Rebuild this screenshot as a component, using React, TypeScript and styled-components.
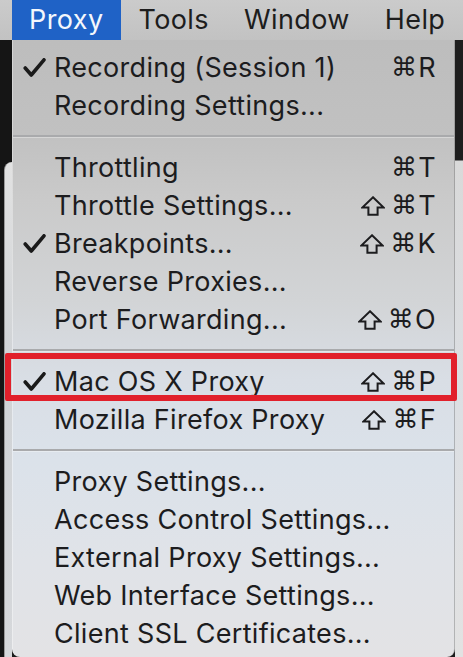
import styled, { createGlobalStyle } from "styled-components";

const GlobalStyle = createGlobalStyle`
  html, body {
    margin: 0;
    padding: 0;
    background: #1b1b1b;
  }
  body {
    font-family: Inter, "Liberation Sans", sans-serif;
  }
`;

type Item = {
  label?: string;
  keys?: string;
  checked?: boolean;
  marked?: boolean;
  separator?: boolean;
};

const MENU_ITEMS: Item[] = [
  { label: "Recording (Session 1)", keys: "⌘R", checked: true },
  { label: "Recording Settings..." },
  { separator: true },
  { label: "Throttling", keys: "⌘T" },
  { label: "Throttle Settings...", keys: "⇧⌘T" },
  { label: "Breakpoints...", keys: "⇧⌘K", checked: true },
  { label: "Reverse Proxies..." },
  { label: "Port Forwarding...", keys: "⇧⌘O" },
  { separator: true },
  { label: "Mac OS X Proxy", keys: "⇧⌘P", checked: true, marked: true },
  { label: "Mozilla Firefox Proxy", keys: "⇧⌘F" },
  { separator: true },
  { label: "Proxy Settings..." },
  { label: "Access Control Settings..." },
  { label: "External Proxy Settings..." },
  { label: "Web Interface Settings..." },
  { label: "Client SSL Certificates..." },
];

const TOP_MENUS = ["Proxy", "Tools", "Window", "Help"];

const Screen = styled.div`
  width: 463px;
  height: 657px;
  overflow: hidden;
  display: flex;
  flex-direction: column;
  background: #1b1b1b;
`;

const MenuBar = styled.div`
  height: 40px;
  flex: none;
  display: flex;
  align-items: stretch;
  padding-left: 12px;
  background: linear-gradient(#cbcbcb, #c2c2c2);
`;

const TopItem = styled.div<{ $open?: boolean }>`
  display: flex;
  align-items: center;
  padding: 0 18px 2px 17px;
  font-size: 27px;
  letter-spacing: 0.4px;
  color: ${({ $open }) => ($open ? "#f4f7fc" : "#1d1d1d")};
  background: ${({ $open }) => ($open ? "#1f62c6" : "transparent")};
`;

const Desk = styled.div`
  flex: 1;
  display: flex;
  min-height: 0;
`;

const LeftEdge = styled.div`
  width: 12px;
  flex: none;
  display: flex;
  flex-direction: column;
  background: #151515;
`;

const WindowCorner = styled.div`
  flex: 1;
  margin: 122px 0 0 4px;
  border-top-left-radius: 8px;
  border-left: 1px solid #9a9a9a;
  background: linear-gradient(#e2e2e2, #d0d3d6 40%, #d6d8db);
`;

const RightEdge = styled.div`
  width: 8px;
  flex: none;
  background: linear-gradient(#1e1e1e 0, #1e1e1e 120px, #d9d9d9 121px, #dcdfe3 60%, #e2e2e2);
`;

const Menu = styled.div`
  flex: 1;
  display: flex;
  flex-direction: column;
  padding-top: 8px;
  border-left: 1px solid rgba(255, 255, 255, 0.35);
  border-right: 1px solid rgba(120, 120, 120, 0.45);
  border-radius: 0 0 8px 8px;
  background: linear-gradient(
    #bdbdbd 0,
    #c1c1c1 96px,
    #cacaca 160px,
    #d2d4d6 260px,
    #d9dee5 340px,
    #dbe2ea 420px,
    #e0e3e8 520px,
    #e3e3e5 617px
  );
`;

const Row = styled.div<{ $marked?: boolean }>`
  position: relative;
  height: 38px;
  flex: none;
  display: grid;
  grid-template-columns: 41px 1fr auto;
  align-items: center;
  padding-right: 18px;
  font-size: 27px;
  color: #1c1c1e;
  letter-spacing: 0.3px;

  ${({ $marked }) =>
    $marked &&
    `
    &::after {
      content: "";
      position: absolute;
      left: -8px;
      right: -3px;
      top: -9px;
      bottom: -1px;
      border: 6px solid #e1202b;
      border-radius: 2px;
    }
  `}
`;

const Check = styled.svg`
  width: 23px;
  height: 19px;
  margin-left: 10px;
  margin-top: 1px;
`;

const Label = styled.span`
  white-space: nowrap;
`;

const Keys = styled.span`
  display: flex;
  align-items: center;
`;

const ShiftIcon = styled.svg`
  width: 24px;
  height: 20px;
  margin: 1px 6px 0 0;
`;

const CommandSymbol = styled.span`
  font-family: "DejaVu Sans", sans-serif;
  font-size: 26px;
  margin-right: 1px;
`;

const KeyLetter = styled.span`
  font-family: Inter, sans-serif;
  font-size: 27px;
`;

const Separator = styled.div`
  height: 24px;
  flex: none;
  display: flex;
  align-items: center;

  &::before {
    content: "";
    flex: 1;
    height: 2px;
    background: #a9aaac;
    box-shadow: 0 1px 0 rgba(255, 255, 255, 0.35);
  }
`;

const CheckMark = () => (
  <Check viewBox="0 0 23 19">
    <path
      d="M2.2 10 L8.3 17 L21 1.8"
      fill="none"
      stroke="#1a1a1a"
      strokeWidth="3.6"
      strokeLinecap="round"
      strokeLinejoin="round"
    />
  </Check>
);

const Shift = () => (
  <ShiftIcon viewBox="0 0 24 20">
    <path
      d="M12 1.3 L22.7 11.6 L16.6 11.6 L16.6 18.8 L7.4 18.8 L7.4 11.6 L1.3 11.6 Z"
      fill="none"
      stroke="#1c1c1e"
      strokeWidth="2"
      strokeLinejoin="miter"
    />
  </ShiftIcon>
);

const Shortcut = ({ keys }: { keys: string }) => (
  <Keys>
    {keys.split("").map((k, j) =>
      k === "⇧" ? (
        <Shift key={j} />
      ) : k === "⌘" ? (
        <CommandSymbol key={j}>{k}</CommandSymbol>
      ) : (
        <KeyLetter key={j}>{k}</KeyLetter>
      )
    )}
  </Keys>
);

export default function App() {
  return (
    <>
      <GlobalStyle />
      <Screen>
        <MenuBar>
          {TOP_MENUS.map((name, i) => (
            <TopItem key={name} $open={i === 0}>
              {name}
            </TopItem>
          ))}
        </MenuBar>
        <Desk>
          <LeftEdge>
            <WindowCorner />
          </LeftEdge>
          <Menu>
            {MENU_ITEMS.map((item, i) =>
              item.separator ? (
                <Separator key={i} />
              ) : (
                <Row key={i} $marked={item.marked}>
                  <span>{item.checked && <CheckMark />}</span>
                  <Label>{item.label}</Label>
                  {item.keys ? <Shortcut keys={item.keys} /> : <span />}
                </Row>
              )
            )}
          </Menu>
          <RightEdge />
        </Desk>
      </Screen>
    </>
  );
}
